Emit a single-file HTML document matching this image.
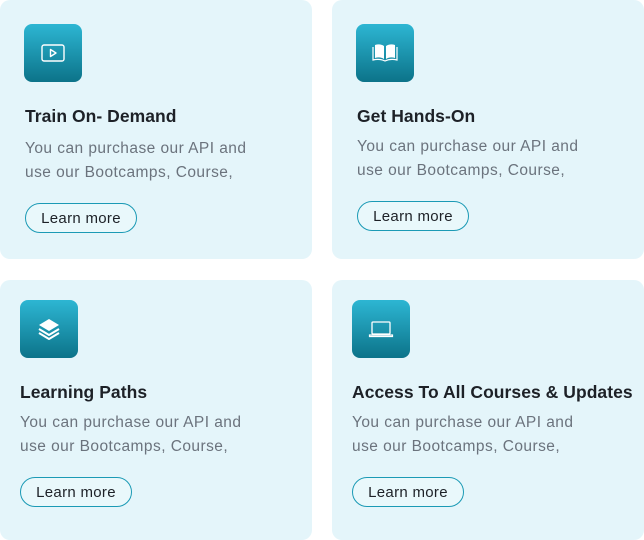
<!DOCTYPE html>
<html><head><style>
*{margin:0;padding:0;box-sizing:border-box}
body{width:644px;height:540px;background:#fff;position:relative;overflow:hidden;font-family:"Liberation Sans",sans-serif}
.card{position:absolute;background:#e4f5fa;border-radius:10px}
.ic{position:absolute;width:58px;height:58px;border-radius:8px;background:linear-gradient(#2db6d3,#0c7389);display:flex;align-items:center;justify-content:center}
.t{position:absolute;font-size:17.5px;font-weight:bold;color:#1d2127;white-space:nowrap;letter-spacing:0.05px}
.p{position:absolute;font-size:15.5px;line-height:24px;color:#6b737d;white-space:nowrap;letter-spacing:0.45px}
.b{position:absolute;width:112px;height:30px;border:1.2px solid #1b9ab5;border-radius:15px;font-size:15px;letter-spacing:0.3px;color:#1d2127;display:flex;align-items:center;justify-content:center;background:#e9f8fb}
</style></head><body>
<div class="card" style="left:0;top:0;width:312px;height:259px"></div>
<div class="card" style="left:332px;top:0;width:312px;height:259px"></div>
<div class="card" style="left:0;top:280px;width:312px;height:260px"></div>
<div class="card" style="left:332px;top:280px;width:312px;height:260px"></div>

<div class="ic" style="left:24px;top:24px"><svg width="24" height="20" viewBox="0 0 24 20"><rect x="1" y="2" width="22" height="16" rx="2" fill="none" stroke="#fff" stroke-width="1.4"/><path d="M9.5 6.5v7l5.5-3.5z" fill="none" stroke="#fff" stroke-width="1.4" stroke-linejoin="round"/></svg></div>
<div class="t" style="left:25px;top:106px">Train On- Demand</div>
<div class="p" style="left:25px;top:137px">You can purchase our API and<br>use our Bootcamps, Course,</div>
<div class="b" style="left:25px;top:203px">Learn more</div>

<div class="ic" style="left:356px;top:24px"><svg width="26" height="22" viewBox="0 0 26 22"><path d="M12 4C9 2 6 2 3 3v13c3-1 6-1 9 1z M14 4c3-2 6-2 9-1v13c-3-1-6-1-9 1z" fill="#fff"/><path d="M1 5v13c4-1 8-1 12 1 4-2 8-2 12-1V5" fill="none" stroke="#fff" stroke-width="1.2"/></svg></div>
<div class="t" style="left:357px;top:106px">Get Hands-On</div>
<div class="p" style="left:357px;top:135px">You can purchase our API and<br>use our Bootcamps, Course,</div>
<div class="b" style="left:357px;top:201px">Learn more</div>

<div class="ic" style="left:20px;top:300px"><svg width="26" height="26" viewBox="0 0 26 26"><path d="M13 3l10 6-10 6-10-6z" fill="#fff"/><path d="M3 13l10 6 10-6M3 17l10 6 10-6" fill="none" stroke="#fff" stroke-width="2" stroke-linejoin="round"/></svg></div>
<div class="t" style="left:20px;top:382px">Learning Paths</div>
<div class="p" style="left:20px;top:411px">You can purchase our API and<br>use our Bootcamps, Course,</div>
<div class="b" style="left:20px;top:477px">Learn more</div>

<div class="ic" style="left:352px;top:300px"><svg width="26" height="20" viewBox="0 0 26 20"><rect x="4" y="3" width="18" height="12" rx="1" fill="none" stroke="#fff" stroke-width="1.3"/><path d="M1.5 16h23v1.5h-23z" fill="none" stroke="#fff" stroke-width="1.2"/></svg></div>
<div class="t" style="left:352px;top:382px">Access To All Courses &amp; Updates</div>
<div class="p" style="left:352px;top:411px">You can purchase our API and<br>use our Bootcamps, Course,</div>
<div class="b" style="left:352px;top:477px">Learn more</div>
</body></html>
